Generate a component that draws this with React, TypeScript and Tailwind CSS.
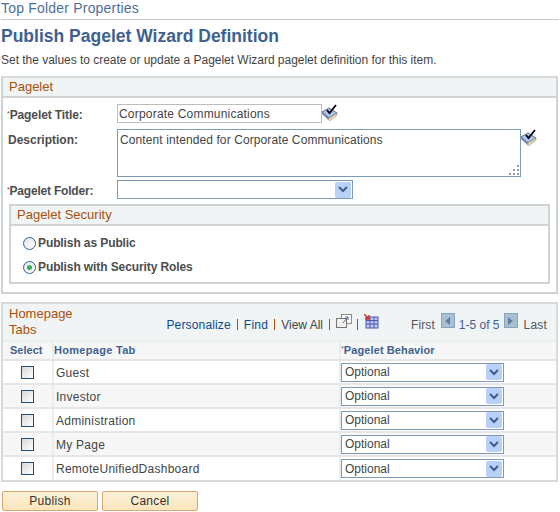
import React from "react";

const Book = () => (
  <svg width="17" height="17" viewBox="0 0 17 17" className="-ml-[1px] block">
    <path d="M1 8 L8 4 L16 9 L8 14 Z" fill="#a9c2e8" stroke="#5f7390" strokeWidth="1" />
    <path d="M1 8 L1 10 L7 15.5 L8 14 Z" fill="#6f86a8" />
    <path d="M7 15.5 L8 14 L16 9 L16 11 L9 16.5 Z" fill="#efe0c0" stroke="#8a7a60" strokeWidth="0.6" />
    <path d="M6 6 L8.5 9 L15 1" fill="none" stroke="#000" strokeWidth="1.8" />
  </svg>
);

const Chevron = () => (
  <span className="flex h-[16px] w-[16px] items-center justify-center rounded-[2px] bg-[#b9d0f7]">
    <svg width="10" height="7" viewBox="0 0 10 7">
      <path d="M1 1 L5 5 L9 1" fill="none" stroke="#3f5f8f" strokeWidth="2" />
    </svg>
  </span>
);

const Select = ({ w, value }: { w: string; value?: string }) => (
  <div className={`${w} flex h-[19px] items-center justify-between border border-[#7d9ab5] bg-white pl-[3px] pr-[1px] text-[12px] text-[#444]`}>
    <span>{value}</span>
    <Chevron />
  </div>
);

const Radio = ({ on, label }: { on?: boolean; label: string }) => (
  <div className="flex h-[24px] items-center">
    <span className="flex h-[13px] w-[13px] items-center justify-center rounded-full border border-[#2f5f8f] bg-gradient-to-br from-[#e4e4e4] to-white">
      {on && <span className="h-[5px] w-[5px] rounded-full bg-[#35b04a]" />}
    </span>
    <span className="ml-[2px] text-[12px] font-bold tracking-[-0.1px] text-[#4d4d4d]">{label}</span>
  </div>
);

const Sep = () => <span className="mx-[6px] inline-block h-[11px] w-px bg-[#a8500c]" />;

const rows = ["Guest", "Investor", "Administration", "My Page", "RemoteUnifiedDashboard"];

export default function App() {
  return (
    <div className="h-[512px] w-[560px] overflow-hidden bg-white font-['Liberation_Sans',Arial,sans-serif]">
      <div className="mx-[1px] h-[20px] border-b border-[#c8c8c8] text-[14px] leading-[16px] tracking-[0.2px] text-[#4f6f97]">Top Folder Properties</div>
      <h1 className="ml-[1px] mt-[5px] text-[17.5px] font-bold leading-[22px] text-[#3f618f]">Publish Pagelet Wizard Definition</h1>
      <p className="ml-[1px] mt-[5px] text-[12px] leading-[16px] tracking-[-0.025px] text-[#444]">Set the values to create or update a Pagelet Wizard pagelet definition for this item.</p>

      <section className="ml-[1px] mt-[8px] h-[218px] w-[557px] border-2 border-[#d0d3d6] border-t-[#d8dbde]">
        <div className="flex h-[20px] items-center border-b-2 border-[#d0d3d6] bg-[#f0f4f5] pl-[6px] text-[13px] text-[#a8500c]">Pagelet</div>
        <div>
          <div className="mt-[6px] flex h-[19px]">
            <label className="w-[114px] pl-[4px] text-[12px] font-bold leading-[22px] tracking-[-0.1px] text-[#4d4d4d]"><sup className="text-[7px] font-normal">*</sup>Pagelet Title:</label>
            <div className="flex h-[19px] w-[205px] items-center border border-[#bdbdbd] pl-[1px] text-[12px] tracking-[0.2px] text-[#444]">Corporate Communications</div>
            <Book />
          </div>
          <div className="mt-[6px] flex h-[48px]">
            <label className="w-[114px] pl-[5px] pt-[3px] text-[12px] font-bold leading-[16px] text-[#4d4d4d]">Description:</label>
            <div className="relative h-[48px] w-[404px] border border-[#7d9ab5] pl-[2px] pt-[2px] text-[12px] leading-[16px] tracking-[0.1px] text-[#444]">
              Content intended for Corporate Communications
              <svg width="11" height="11" viewBox="0 0 11 11" className="absolute bottom-[1px] right-[1px]">
                <path d="M9 1h2v2H9zM5 5h2v2H5zM9 5h2v2H9zM1 9h2v2H1zM5 9h2v2H5zM9 9h2v2H9z" fill="#9a9a9a" />
              </svg>
            </div>
            <Book />
          </div>
          <div className="mt-[3px] flex h-[19px]">
            <label className="w-[114px] pl-[4px] text-[12px] font-bold leading-[23px] tracking-[-0.2px] text-[#4d4d4d]"><sup className="text-[7px] font-normal">*</sup>Pagelet Folder:</label>
            <Select w="w-[236px]" />
          </div>
        </div>
        <div className="ml-[6px] mt-[5px] h-[80px] w-[541px] border-2 border-[#d0d3d6]">
          <div className="flex h-[20px] items-center border-b-2 border-[#d0d3d6] bg-[#f0f4f5] pl-[6px] text-[13px] text-[#a8500c]">Pagelet Security</div>
          <div className="pl-[12px] pt-[5px]">
            <Radio label="Publish as Public" />
            <Radio on label="Publish with Security Roles" />
          </div>
        </div>
      </section>

      <section className="ml-[1px] mt-[8px] w-[557px] border-2 border-[#d8dbde]">
        <div className="flex h-[36px] items-center justify-between bg-[#f0f4f5] pl-[6px] pr-[9px]">
          <div className="w-[80px] text-[13px] leading-[16px] text-[#a8500c]">Homepage Tabs</div>
          <div className="flex items-center pt-[5px] text-[12px]">
            <span className="tracking-[0.15px] text-[#0a4a8a]">Personalize</span><Sep />
            <span className="tracking-[0.25px] text-[#0a4a8a]">Find</span><Sep />
            <span className="text-[#444]">View All</span><Sep />
            <svg width="16" height="15" viewBox="0 0 16 15" className="mb-[6px]">
              <rect x="5.5" y="0.5" width="10" height="9" fill="#fff" stroke="#8a8a8a" />
              <rect x="0.5" y="4.5" width="10" height="9" fill="#f0f0f0" stroke="#777" />
              <path d="M7 9 L12 3 M9 3 L12 3 L12 6" fill="none" stroke="#4a6a94" />
            </svg>
            <span className="ml-[5px] mr-[6px] inline-block h-[11px] w-px bg-[#a8500c]" />
            <svg width="15" height="15" viewBox="0 0 15 15" className="mb-[6px]">
              <rect x="2" y="3" width="12" height="11" fill="#c0c8ea" stroke="#4c55b4" />
              <path d="M2 6.5 H14 M2 10 H14 M6 3 V14 M10 3 V14" stroke="#4c55b4" />
              <path d="M0 0 L5 5 M5 1 V5 H1" fill="none" stroke="#d8302a" strokeWidth="1.5" />
            </svg>
            <span className="ml-[32px] tracking-[0.1px] text-[#555]">First</span>
            <span className="ml-[6px] mr-[4px] mb-[8px] flex h-[15px] w-[14px] items-center justify-center border border-[#8aa3bd] bg-[#a9bfd2]">
              <span className="h-0 w-0 border-y-[4px] border-r-[5px] border-y-transparent border-r-[#5f7f9f]" />
            </span>
            <span className="text-[#3f618f]">1-5 of 5</span>
            <span className="ml-[4px] mr-[6px] mb-[8px] flex h-[15px] w-[14px] items-center justify-center border border-[#8aa3bd] bg-[#a9bfd2]">
              <span className="h-0 w-0 border-y-[4px] border-l-[5px] border-y-transparent border-l-[#5f7f9f]" />
            </span>
            <span className="tracking-[0.2px] text-[#555]">Last</span>
          </div>
        </div>
        <div className="flex h-[21px] border-y-2 border-t-[#eeeeee] border-b-[#e4e4e4] bg-[#f7f7f7] text-[11px] font-bold leading-[17px] text-[#3f618f]">
          <div className="w-[51px] border-r-2 border-[#ececec] pl-[7px]">Select</div>
          <div className="w-[287px] border-r-2 border-[#ececec] tracking-[0.3px]">Homepage Tab</div>
          <div className="tracking-[0.1px]"><sup className="text-[7px] font-normal">*</sup>Pagelet Behavior</div>
        </div>
        {rows.map((r, i) => (
          <div key={r} className={`flex h-[24px] border-b-2 border-[#e6e6e6] last:h-[23px] last:border-b-0 ${i % 2 ? "bg-[#f7f7f7]" : "bg-white"}`}>
            <div className="flex w-[51px] items-center justify-center border-r-2 border-[#ececec]">
              <span className="h-[13px] w-[13px] border border-[#1f4f7f] bg-gradient-to-br from-[#d8d8d8] to-white" />
            </div>
            <div className={`flex w-[287px] items-center border-r-2 border-[#ececec] pl-[2px] text-[12px] tracking-[0.25px] text-[#444] ${i < 4 ? "pt-[2px]" : ""}`}>{r}</div>
            <div className="flex items-center"><Select w="w-[163px]" value="Optional" /></div>
          </div>
        ))}
      </section>

      <div className="ml-[2px] mt-[9px] flex gap-[4px]">
        {["Publish", "Cancel"].map((b) => (
          <button key={b} className="h-[20px] w-[96px] rounded-[2px] border border-[#dba76e] bg-gradient-to-b from-[#fdf1d8] to-[#fbe5bc] text-[12px] leading-none tracking-[0.3px] text-[#333]">{b}</button>
        ))}
      </div>
    </div>
  );
}
